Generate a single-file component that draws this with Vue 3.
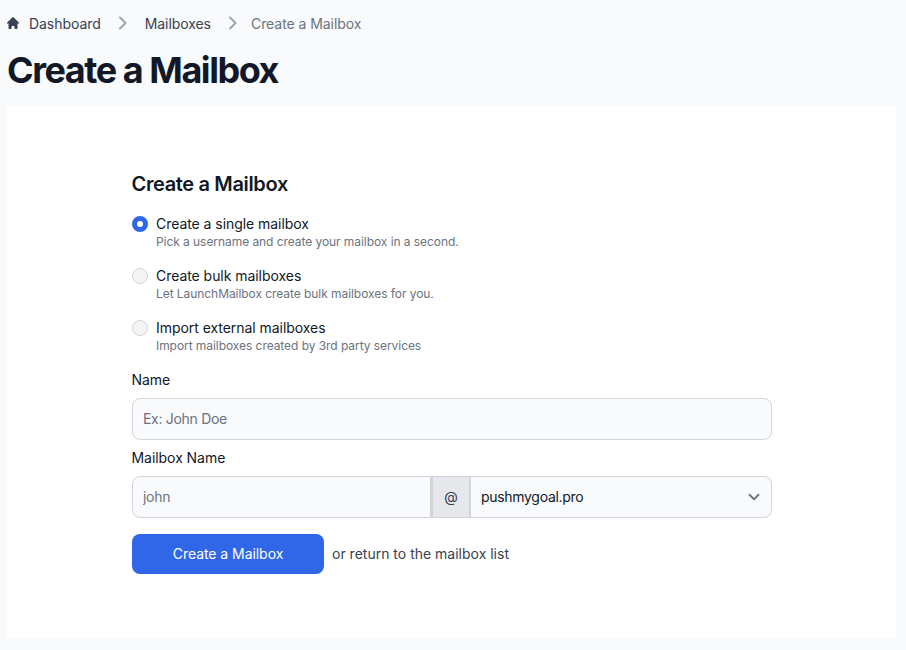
<template>
  <div class="page">
    <nav class="crumbs">
      <svg class="home-icon" viewBox="2 2 16 16" fill="currentColor">
        <path d="M10.7 2.3a1 1 0 0 0-1.4 0l-7 7a1 1 0 0 0 1.4 1.4l.3-.3V17a1 1 0 0 0 1 1h2a1 1 0 0 0 1-1v-2a1 1 0 0 1 1-1h2a1 1 0 0 1 1 1v2a1 1 0 0 0 1 1h2a1 1 0 0 0 1-1v-6.600l.3.3a1 1 0 0 0 1.400-1.400l-7-7z" />
      </svg>
      <a class="crumb">Dashboard</a>
      <svg class="sep" viewBox="0 0 10 14" fill="none" stroke="currentColor" stroke-width="2" stroke-linecap="round" stroke-linejoin="round">
        <path d="M2 1.500L7.500 7 2 12.500" />
      </svg>
      <a class="crumb">Mailboxes</a>
      <svg class="sep last" viewBox="0 0 10 14" fill="none" stroke="currentColor" stroke-width="2" stroke-linecap="round" stroke-linejoin="round">
        <path d="M2 1.500L7.500 7 2 12.500" />
      </svg>
      <span class="crumb current">Create a Mailbox</span>
    </nav>

    <h1 class="page-title">Create a Mailbox</h1>

    <section class="card">
      <form class="form" @submit.prevent>
        <h2 class="form-title">Create a Mailbox</h2>

        <div class="options">
          <label v-for="opt in options" :key="opt.value" class="option">
            <input v-model="mode" class="radio" type="radio" name="mode" :value="opt.value">
            <span class="option-text">
              <span class="option-label">{{ opt.label }}</span>
              <span class="option-help">{{ opt.help }}</span>
            </span>
          </label>
        </div>

        <label class="field-label" for="name">Name</label>
        <input id="name" class="text-input" type="text" placeholder="Ex: John Doe">

        <label class="field-label second" for="mailbox">Mailbox Name</label>
        <div class="mailbox-row">
          <input id="mailbox" class="text-input user" type="text" placeholder="john">
          <span class="at">@</span>
          <div class="domain">
            <select class="domain-select">
              <option>pushmygoal.pro</option>
            </select>
            <svg class="chevron" viewBox="0 0 20 20" fill="none" stroke="currentColor" stroke-width="2" stroke-linecap="round" stroke-linejoin="round">
              <path d="M5 7.500l5 5 5-5" />
            </svg>
          </div>
        </div>

        <div class="actions">
          <button type="submit" class="submit">Create a Mailbox</button>
          <span class="return">or return to the mailbox list</span>
        </div>
      </form>
    </section>
  </div>
</template>

<script setup>
import { ref } from 'vue';

const mode = ref('single');

const options = [
  { value: 'single', label: 'Create a single mailbox', help: 'Pick a username and create your mailbox in a second.' },
  { value: 'bulk', label: 'Create bulk mailboxes', help: 'Let LaunchMailbox create bulk mailboxes for you.' },
  { value: 'import', label: 'Import external mailboxes', help: 'Import mailboxes created by 3rd party services' },
];
</script>

<style scoped>
.page {
  height: 650px;
  box-sizing: border-box;
  padding: 0 10px 0 7px;
  background-color: #f9fafb;
  font-family: Inter, "Liberation Sans", sans-serif;
  overflow: hidden;
}

.crumbs {
  display: flex;
  align-items: center;
  height: 20px;
  padding-top: 13px;
  font-size: 14px;
  font-weight: 400;
  letter-spacing: -0.06px;
  color: #374151;
}

.home-icon {
  width: 12px;
  height: 12px;
  margin-right: 10px;
  color: #374151;
}

.crumb.current {
  color: #6b7280;
}

.sep {
  width: 10px;
  height: 14px;
  margin: 0 17px;
  color: #9ca3af;
}

.sep.last {
  margin-right: 13px;
}

.page-title {
  margin: 17px 0 0;
  font-size: 36px;
  line-height: 40px;
  font-weight: 700;
  letter-spacing: -1.45px;
  color: #111827;
}

.card {
  margin-top: 16px;
  height: 532px;
  background-color: #ffffff;
  padding: 65px 0 0 125px;
  box-sizing: border-box;
}

.form {
  width: 640px;
}

.form-title {
  margin: 0 0 0 -0.5px;
  font-size: 20px;
  line-height: 26px;
  font-weight: 600;
  letter-spacing: -0.35px;
  color: #111827;
}

.options {
  display: flex;
  flex-direction: column;
  gap: 16px;
  margin-top: 17px;
}

.option {
  display: flex;
  align-items: flex-start;
  height: 36px;
}

.radio {
  appearance: none;
  width: 16px;
  height: 16px;
  margin: 2px 8px 0 0;
  border: 1px solid #d1d5db;
  border-radius: 50%;
  background-color: #f3f4f6;
}

.radio:checked {
  border: 5px solid #2f67e8;
  background-color: #ffffff;
}

.option-text {
  display: flex;
  flex-direction: column;
}

.option-label {
  font-size: 14px;
  line-height: 20px;
  font-weight: 400;
  letter-spacing: -0.05px;
  color: #111827;
}

.option-help {
  font-size: 12px;
  line-height: 16px;
  letter-spacing: -0.06px;
  color: #6b7280;
}

.field-label {
  display: block;
  margin: 16px 0 0 -0.5px;
  font-size: 14px;
  line-height: 20px;
  font-weight: 400;
  letter-spacing: -0.05px;
  color: #111827;
}

.field-label.second {
  margin-top: 8px;
}

.text-input {
  display: block;
  width: 100%;
  height: 42px;
  box-sizing: border-box;
  margin-top: 8px;
  padding: 0 10px 2px;
  border: 1px solid #d1d5db;
  border-radius: 8px;
  background-color: #f9fafb;
  font-family: inherit;
  font-size: 14px;
  letter-spacing: -0.3px;
  color: #111827;
}

.text-input::placeholder {
  color: #6b7280;
  opacity: 1;
}

.mailbox-row {
  display: flex;
  margin-top: 8px;
  height: 42px;
}

.text-input.user {
  width: 299px;
  flex: none;
  margin-top: 0;
  border-radius: 8px 0 0 8px;
}

.at {
  display: flex;
  align-items: center;
  justify-content: center;
  flex: none;
  width: 40px;
  box-sizing: border-box;
  padding: 0 0 2px;
  border: 1px solid #d1d5db;
  border-left-width: 2px;
  border-right-width: 2px;
  background-color: #e5e7eb;
  font-size: 14px;
  color: #374151;
}

.domain {
  position: relative;
  flex: 1;
}

.domain-select {
  appearance: none;
  display: block;
  width: 100%;
  height: 42px;
  box-sizing: border-box;
  padding: 0 40px 2px 10px;
  border: 1px solid #d1d5db;
  border-left: none;
  border-radius: 0 8px 8px 0;
  background-color: #f9fafb;
  font-family: inherit;
  font-size: 14px;
  letter-spacing: -0.3px;
  color: #111827;
}

.chevron {
  position: absolute;
  top: 12px;
  right: 9px;
  width: 18px;
  height: 18px;
  color: #6b7280;
  pointer-events: none;
}

.actions {
  display: flex;
  align-items: center;
  gap: 8px;
  margin-top: 16px;
}

.submit {
  width: 192px;
  height: 40px;
  padding: 0 0 2px;
  border: none;
  border-radius: 8px;
  background-color: #2f67e8;
  font-family: inherit;
  font-size: 14px;
  font-weight: 400;
  letter-spacing: -0.05px;
  color: #ffffff;
  cursor: pointer;
}

.return {
  padding-bottom: 2px;
  font-size: 14px;
  font-weight: 400;
  color: #374151;
}
</style>
